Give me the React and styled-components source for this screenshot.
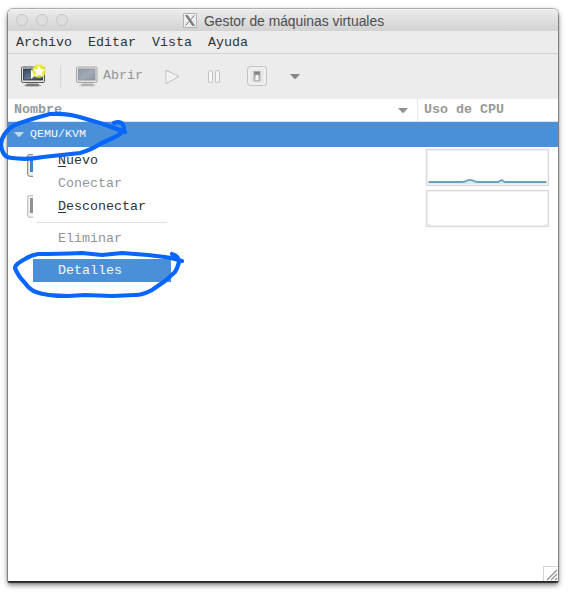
import React from "react";
import styled, { createGlobalStyle } from "styled-components";

const Global = createGlobalStyle`
  * { box-sizing: border-box; }
  html, body { margin: 0; background: #fff; overflow: hidden; }
`;

const Desktop = styled.main`
  position: relative;
  width: 577px;
  height: 599px;
  padding: 9px 0 0 8px;
  overflow: hidden;
  background: #fff;
  font: 13.333px/16px "Liberation Mono", monospace;
  color: #2e3436;
`;

const Window = styled.section`
  display: flex;
  flex-direction: column;
  width: 550px;
  height: 572px;
  border-radius: 5px 5px 0 0;
  background: #fff;
  box-shadow: 0 0 1px 1px rgba(0, 0, 0, 0.3), 0 2px 1px rgba(0, 0, 0, 0.65), 0 4px 5px rgba(0, 0, 0, 0.45), 0 2px 7px 1px rgba(0, 0, 0, 0.15);
`;

const TitleBar = styled.header`
  display: grid;
  grid-template-columns: 175px auto 1fr;
  align-items: center;
  height: 22px;
  border-radius: 5px 5px 0 0;
  border-top: 1px solid #f6f6f6;
  background: linear-gradient(#ebebeb, #d2d2d2);
`;

const Lights = styled.div`
  display: flex;
  gap: 8px;
  padding-left: 8px;
  margin-top: -1px;
`;

const Light = styled.span`
  width: 12px;
  height: 12px;
  border: 1px solid #c7c7c7;
  border-radius: 50%;
  background: #dedede;
`;

const Title = styled.h1`
  display: flex;
  align-items: center;
  gap: 7px;
  margin: 0;
  font: 13.85px/20px "Liberation Sans", sans-serif;
  color: #4c4c4c;
  white-space: nowrap;
`;

const MenuBar = styled.nav`
  display: flex;
  gap: 16px;
  height: 23px;
  padding: 4px 8px 0;
  border-bottom: 1px solid #d3d3d3;
  background: #ececec;
`;

const Toolbar = styled.div`
  display: flex;
  align-items: center;
  height: 45px;
  padding-left: 12px;
  background: #ececec;
  svg { flex: none; display: block; }
`;

const Divider = styled.span`
  width: 1px;
  height: 23px;
  margin: 0 14px 0 13px;
  background: #d6d6d6;
`;

const OpenButton = styled.span`
  display: flex;
  align-items: center;
  gap: 5px;
  width: 89px;
  color: #929595;
  span { margin-top: -2px; }
`;

const Columns = styled.div`
  display: grid;
  grid-template-columns: 410px 1fr;
  height: 23px;
  border-bottom: 1px solid #e2e2e2;
  font-weight: bold;
  line-height: 20px;
  color: #979a9b;
`;

const Column = styled.div`
  display: flex;
  align-items: center;
  justify-content: space-between;
  padding: 0 9px 0 6px;
  border-right: ${(p) => (p.$last ? "0" : "1px solid #e7e7e7")};
  span { margin-top: -1px; }
`;

const Connection = styled.div`
  display: flex;
  align-items: center;
  gap: 6px;
  height: 25px;
  padding-left: 6px;
  background: #4a90d9;
  color: #f5f9fd;
  font-size: 11.667px;
  line-height: 23px;
`;

const Content = styled.div`
  position: relative;
  display: flex;
  justify-content: space-between;
  flex: 1;
  padding: 2px 9px 0 18px;
`;

const Machines = styled.div`
  display: flex;
  flex-direction: column;
  gap: 18px;
  padding: 5px 0 0 1px;
`;

const Graphs = styled.div`
  display: flex;
  flex-direction: column;
  gap: 4px;
`;

const Graph = styled.div`
  width: 123px;
  height: 37px;
  border: 1px solid #ded9da;
  box-shadow: inset 0 0 0 1px #f1eff0, 0 0 0 1px #faf9f9;
  svg { display: block; }
`;

const ContextMenu = styled.div`
  position: absolute;
  left: 25px;
  top: 2px;
  width: 138px;
`;

const MenuItem = styled.div`
  height: 23px;
  padding-left: 25px;
  line-height: 23px;
  color: ${(p) => (p.$active ? "#f5f9fd" : p.$disabled ? "#939696" : "#2e3436")};
  background: ${(p) => (p.$active ? "#4a90d9" : "transparent")};
  u { text-decoration-thickness: 1px; text-underline-offset: 2px; }
`;

const Separator = styled.div`
  height: 1px;
  margin: 4px;
  background: ${(p) => (p.$blank ? "transparent" : "#e0e0e0")};
`;

const ResizeGrip = styled.div`
  position: absolute;
  right: 0;
  bottom: 0;
  width: 15px;
  height: 15px;
  border: solid #d5d5d5;
  border-width: 1px 0 0 1px;
  svg { display: block; }
`;

const Ink = styled.svg`
  position: absolute;
  left: 0;
  top: 0;
  pointer-events: none;
`;

const Arrow = ({ color = "#909394" }) => (
  <svg width="10" height="5" viewBox="0 0 10 5"><path d="M0 0H10L6 4.5Q5 5.3 4 4.5Z" fill={color} /></svg>
);

const Monitor = ({ fresh }) => (
  <svg width={fresh ? 27 : 23} height="26" viewBox={fresh ? "0 0 27 26" : "0 0 23 26"}>
    <defs>
      <linearGradient id={fresh ? "screenNew" : "screen"} x2="1" y2="1">
        <stop stopColor={fresh ? "#344760" : "#8d98a8"} />
        <stop offset=".55" stopColor={fresh ? "#65758b" : "#a4abb7"} />
        <stop offset="1" stopColor={fresh ? "#344055" : "#8b93a1"} />
      </linearGradient>
      <radialGradient id="glow"><stop offset=".5" stopColor="#e9e81c" /><stop offset=".8" stopColor="#eeee3e" stopOpacity=".85" /><stop offset="1" stopColor="#eeee70" stopOpacity="0" /></radialGradient>
    </defs>
    <ellipse cx="12.5" cy="21.5" rx="9" ry="1.3" fill={fresh ? "#888" : "#c4c4c4"} opacity=".6" />
    <path d="M8 18H17L18 20.5H7Z" fill={fresh ? "#bbb" : "#ccc"} />
    <path d="M6 21H19" stroke={fresh ? "#6b6d6b" : "#a9abaa"} strokeWidth="1.6" />
    <rect x="1.5" y="3" width={fresh ? 23 : 20.5} height="15.5" rx="1.2" fill={fresh ? "#e5e5e4" : "#dedfdf"} stroke={fresh ? "#555855" : "#a6a8a7"} />
    <rect x="3.5" y="5" width={fresh ? 19 : 16.5} height="11" fill={`url(#${fresh ? "screenNew" : "screen"})`} stroke={fresh ? "#273449" : "#8b929b"} strokeWidth=".8" />
    {fresh && <><path d="M11 5.5V15L17 10Z" fill="#fff" /><circle cx="19" cy="7" r="7.6" fill="url(#glow)" /><path d="M19 1.5L20.8 5L24.8 5.6L22 8.5L22.8 12.4L19.2 10.6L15.5 12.4L16.2 8.5L13.3 5.6L17.2 5Z" fill="#fff" /></>}
  </svg>
);

const MachineIcon = ({ running }) => (
  <svg width="6" height="23" viewBox="0 0 6 23">
    <path d="M6 .7H2Q.7.7.7 2V20.5Q.7 22.3 3 22.3H6" fill={running ? "#eee" : "#f2f2f2"} stroke={running ? "#777" : "#b6b6b6"} />
    <rect x="3" y="3" width="3" height="15" fill={running ? "#3d86cb" : "#929292"} />
  </svg>
);

export default function App() {
  return (
    <>
      <Global />
      <Desktop>
        <Window>
          <TitleBar>
            <Lights><Light /><Light /><Light /></Lights>
            <Title>
              <svg width="14" height="15" viewBox="0 0 14 15">
                <path d="M.5.5H13.5V14.5H.5Z" fill="#eee" stroke="#b4b4b4" />
                <path d="M2.5 2.5H4.5L11.5 12.5H9.5Z" fill="#777" stroke="#777" strokeWidth=".8" />
                <path d="M11.5 2.3L2.5 12.6" stroke="#777" strokeWidth="1" />
              </svg>
              Gestor de máquinas virtuales
            </Title>
          </TitleBar>
          <MenuBar><span>Archivo</span><span>Editar</span><span>Vista</span><span>Ayuda</span></MenuBar>
          <Toolbar>
            <Monitor fresh />
            <Divider />
            <OpenButton><Monitor /><span>Abrir</span></OpenButton>
            <svg width="17" height="18" viewBox="0 0 17 18"><path d="M2 2.2L15 8.5L2 15.5Z" fill="#f0f0f0" stroke="#bbb" strokeLinejoin="round" /><path d="M3.3 4.3L12.6 8.5L3.3 13.5Z" fill="none" stroke="#fafafa" /></svg>
            <svg width="66" height="18" viewBox="0 0 66 18"><g fill="#f6f6f6" stroke="#c4c4c4"><rect x="27.5" y="2.8" width="4" height="11.5" rx=".5" /><rect x="34.5" y="2.8" width="4" height="11.5" rx=".5" /></g></svg>
            <svg width="20" height="22" viewBox="0 0 20 22">
              <defs><linearGradient id="power" x2="0" y2="1"><stop stopColor="#747474" /><stop offset="1" stopColor="#d1d1d1" /></linearGradient></defs>
              <rect x=".7" y=".7" width="18.6" height="18.6" rx="2.5" fill="#eee" stroke="#b9b9b9" />
              <rect x="2" y="2" width="16" height="16" rx="1.5" fill="#e9e9e9" stroke="#fafafa" />
              <rect x="7" y="5.5" width="6" height="9.5" fill="url(#power)" stroke="#aaa" /><rect x="8.5" y="9" width="3" height="5" fill="#f4f4f4" />
            </svg>
            <svg width="33" height="5" viewBox="0 0 33 5"><path d="M23 0H33L29 4.5Q28 5.3 27 4.5Z" fill="#858888" /></svg>
          </Toolbar>
          <Columns><Column><span>Nombre</span><Arrow /></Column><Column $last><span>Uso de CPU</span></Column></Columns>
          <Connection><Arrow color="#bfd8f0" />QEMU/KVM</Connection>
          <Content>
            <Machines><MachineIcon running /><MachineIcon /></Machines>
            <Graphs>
              <Graph><svg width="121" height="35" viewBox="0 0 121 35"><path d="M1.5 32H35Q38 32 40 30.5Q43 29.3 46 30.5Q48 32 51 32H71L74.5 30L78 32H119.5V34H1.5Z" fill="#d8ebf1" /><path d="M1.5 32H35Q38 32 40 30.5Q43 29.3 46 30.5Q48 32 51 32H71L74.5 30L78 32H119.5" fill="none" stroke="#68a3ba" strokeWidth="1.8" /></svg></Graph>
              <Graph><svg width="121" height="35" viewBox="0 0 121 35"><path d="M1 33.5H4M117 33.5H120" stroke="#e4eeef" /></svg></Graph>
            </Graphs>
            <ContextMenu>
              <MenuItem><u>N</u>uevo</MenuItem>
              <MenuItem $disabled>Conectar</MenuItem>
              <MenuItem><u>D</u>esconectar</MenuItem>
              <Separator />
              <MenuItem $disabled>Eliminar</MenuItem>
              <Separator $blank />
              <MenuItem $active>Detalles</MenuItem>
            </ContextMenu>
            <ResizeGrip><svg width="14" height="14" viewBox="0 0 14 14"><path d="M3 13L13 3M7 13L13 7M11 13L13 11" stroke="#8c908d" strokeWidth="1.2" /></svg></ResizeGrip>
          </Content>
        </Window>
        <Ink width="577" height="599" viewBox="0 0 577 599" fill="none" stroke="#0866fa" strokeWidth="4.2" strokeLinecap="round" strokeLinejoin="round">
          <path d="M125 132Q114 128 103 124L83 118Q68 113 50 114Q34 118 17 124C6 129 1 138 1 145C2 154 6 158 12 158Q27 160 43 157L80 153Q91 150 100 144L117 136Q122 133 124 129C124 122 119 121 114 123" />
          <path d="M182 261Q173 258 165 257L148 255L122 253L102 255L82 253Q57 254 38 254Q31 255 25 259C18 263 15 265 15 268Q18 276 25 283Q30 290 36 292Q46 296 68 296L85 295L112 296L135 295Q143 295 152 290L165 281L175 272Q179 265 179 260Q177 255 172 254" />
        </Ink>
      </Desktop>
    </>
  );
}
